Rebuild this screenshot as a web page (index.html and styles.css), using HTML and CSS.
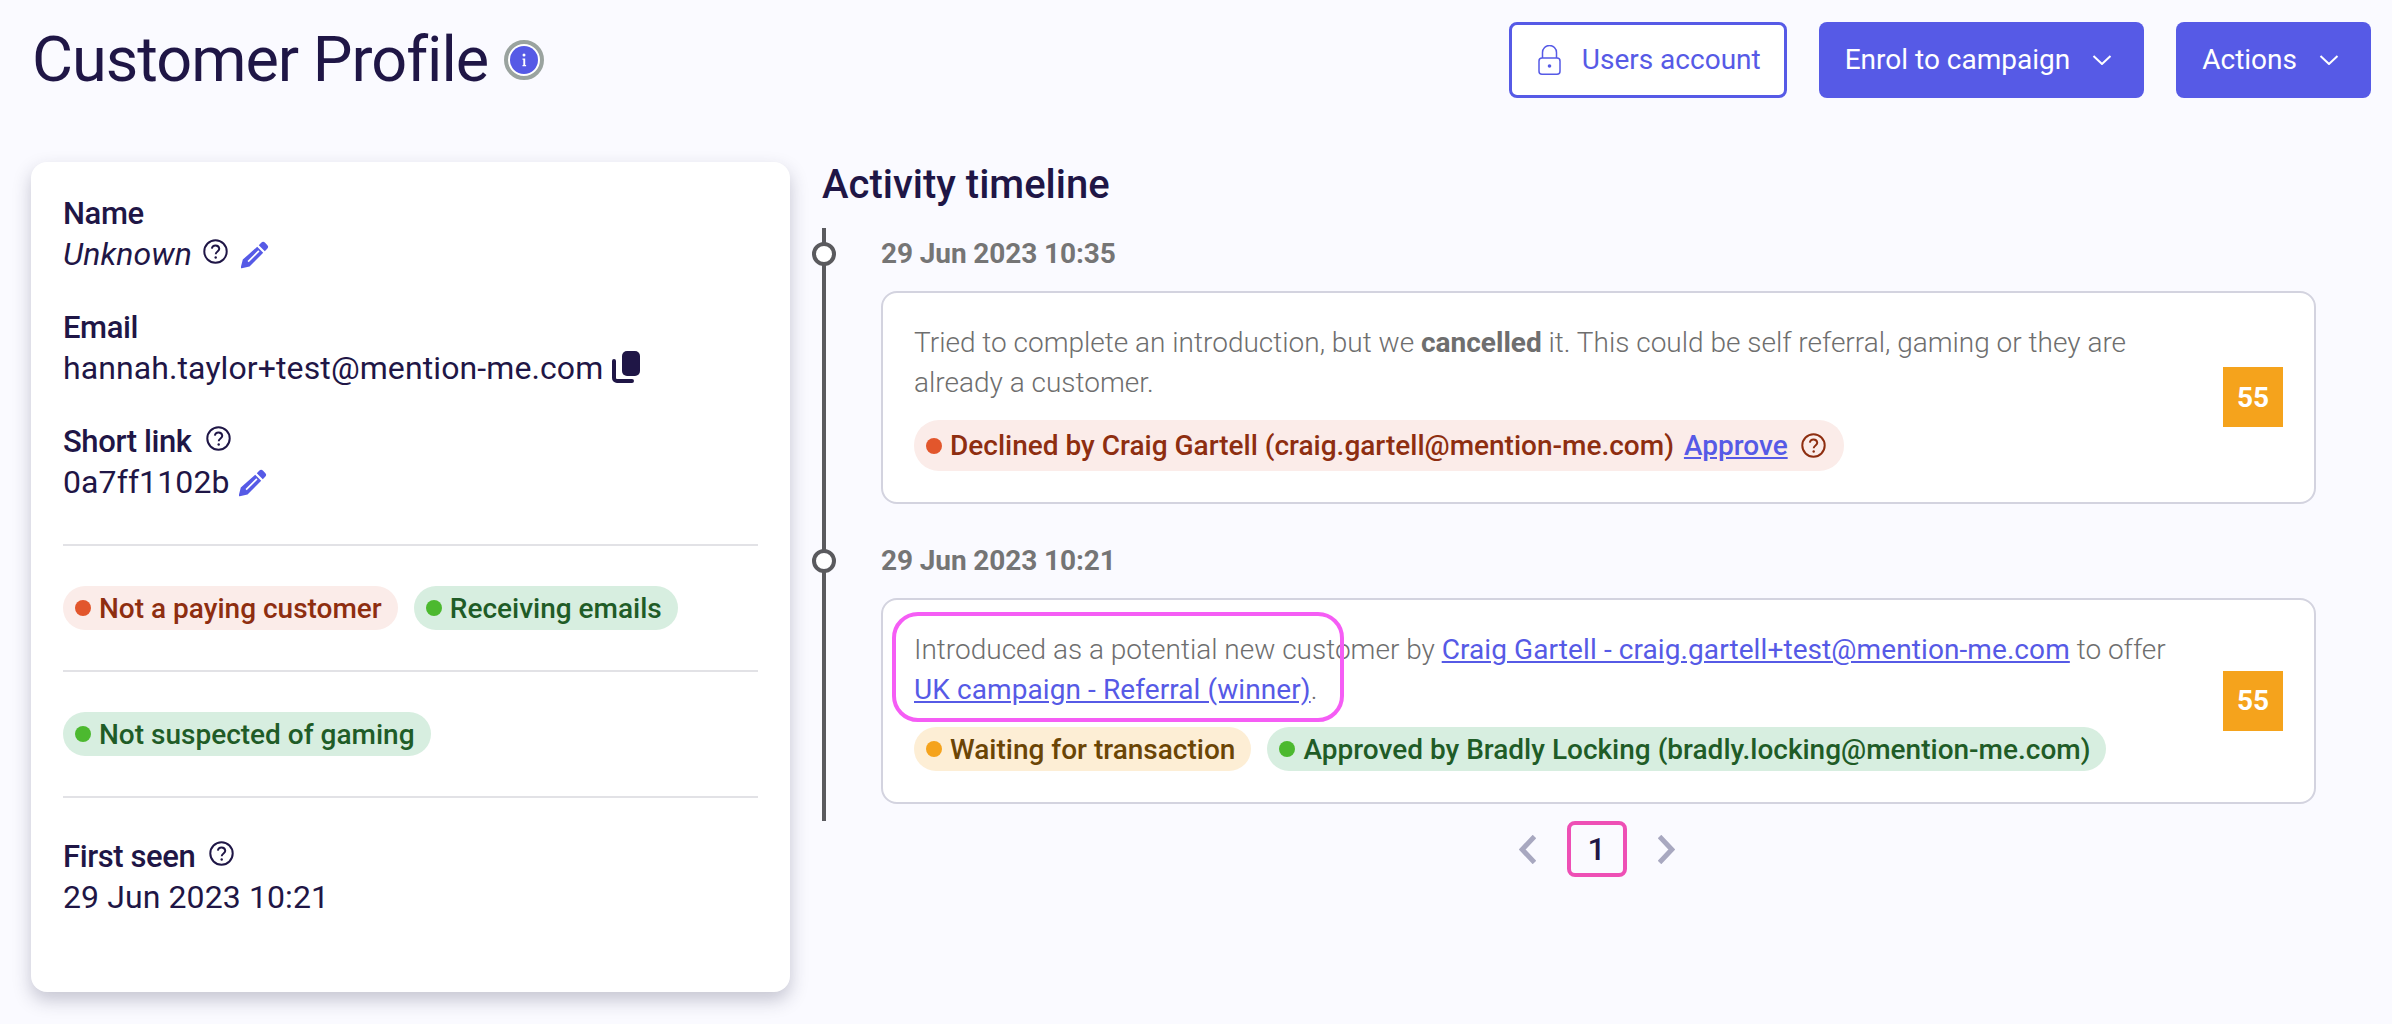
FILE: index.html
```html
<!DOCTYPE html>
<html lang="en">
<head>
<meta charset="utf-8">
<title>Customer Profile</title>
<link rel="stylesheet" href="styles.css">
</head>
<body>
<svg class="defs" width="0" height="0" aria-hidden="true">
  <symbol id="q" viewBox="0 0 25 25"><circle cx="12.5" cy="12.5" r="11.2" fill="none" stroke="currentColor" stroke-width="2"/><path d="M8.8 9.6a3.8 3.8 0 0 1 7.5.2c0 2.500-3.600 2.800-3.600 5.400" fill="none" stroke="currentColor" stroke-width="1.900"/><circle cx="12.700" cy="18.500" r="1.200" fill="currentColor"/></symbol>
  <symbol id="pen" viewBox="0 0 28 28"><path d="M20.200 1.800a2.800 2.800 0 0 1 3.900 0l2.100 2.100a2.800 2.800 0 0 1 0 3.900l-2.400 2.400-6-6zM16.200 5.800l6 6L8.500 25.500 0.800 27.300a.8.8 0 0 1-1-1L1.800 18.600zM17.300 9.300 6.500 20.100l1.200 1.200L18.500 10.500z" fill="currentColor" fill-rule="evenodd"/></symbol>
  <symbol id="chev" viewBox="0 0 20 10"><path d="M1.500 1 10 9 18.500 1" fill="none" stroke="currentColor" stroke-width="2"/></symbol>
</svg>
<div class="page">
  <header class="top">
    <div class="title-wrap">
      <h1 class="title">Customer Profile</h1>
      <svg class="info" viewBox="0 0 40 40"><circle cx="20" cy="20" r="18" fill="#fff" stroke="#9aa39f" stroke-width="4"/><circle cx="20" cy="20" r="14" fill="#565ae6"/><path d="M18.500 18.500h2.700v6.500h.9v1.300h-3.600v-1.300h.8v-5.200h-.8z" fill="#fff"/><circle cx="20" cy="15" r="1.500" fill="#fff"/></svg>
    </div>
    <div class="actions">
      <a class="btn btn-outline">
        <svg class="lock" viewBox="0 0 23 30"><path d="M4.500 13V7.500a7 7 0 0 1 14 0V13" fill="none" stroke="currentColor" stroke-width="1.500"/><rect x="1" y="13" width="21" height="16.200" rx="3" fill="none" stroke="currentColor" stroke-width="1.500"/><circle cx="11.500" cy="21" r="1.800" fill="currentColor"/></svg>
        Users account
      </a>
      <a class="btn btn-solid">Enrol to campaign<svg class="chev"><use href="#chev"/></svg></a>
      <a class="btn btn-solid">Actions<svg class="chev"><use href="#chev"/></svg></a>
    </div>
  </header>

  <main class="main">
    <aside class="panel">
      <div class="field">
        <div class="label">Name</div>
        <div class="value"><em>Unknown</em><svg class="q q-val"><use href="#q"/></svg><svg class="pen"><use href="#pen"/></svg></div>
      </div>
      <div class="field">
        <div class="label">Email</div>
        <div class="value">hannah.taylor+test@mention-me.com<svg class="copy" viewBox="0 0 28 32"><path d="M2 10.500v17a3 3 0 0 0 3 3h15" fill="none" stroke="currentColor" stroke-width="4" stroke-linecap="round" transform="translate(0 -.500)"/><rect x="10" y="0" width="18" height="25" rx="5" fill="currentColor"/></svg></div>
      </div>
      <div class="field field-last">
        <div class="label">Short link<svg class="q q-lab"><use href="#q"/></svg></div>
        <div class="value">0a7ff1102b<svg class="pen pen-short"><use href="#pen"/></svg></div>
      </div>
      <div class="pills-row">
        <span class="pill red"><i class="dot"></i>Not a paying customer</span>
        <span class="pill green"><i class="dot"></i>Receiving emails</span>
      </div>
      <div class="pills-row">
        <span class="pill green"><i class="dot"></i>Not suspected of gaming</span>
      </div>
      <div class="field field-seen">
        <div class="label">First seen<svg class="q q-lab"><use href="#q"/></svg></div>
        <div class="value">29 Jun 2023 10:21</div>
      </div>
    </aside>

    <section class="activity">
      <h2 class="activity-title">Activity timeline</h2>
      <ul class="timeline">
        <li class="event">
          <div class="date">29 Jun 2023 10:35</div>
          <div class="card">
            <div class="card-body">
              <p class="text">Tried to complete an introduction, but we <b>cancelled</b> it. This could be self referral, gaming or they are already a customer.</p>
              <div class="card-pills">
                <span class="pill red pill-tall"><i class="dot"></i>Declined by Craig Gartell (craig.gartell@mention-me.com)<a class="pill-link">Approve</a><svg class="q q-pill"><use href="#q"/></svg></span>
              </div>
            </div>
            <div class="score">55</div>
          </div>
        </li>
        <li class="event event-2">
          <div class="date">29 Jun 2023 10:21</div>
          <div class="card">
            <div class="card-body">
              <div class="highlight"></div>
              <p class="text">Introduced as a potential new customer by <a class="link">Craig Gartell - craig.gartell+test@mention-me.com</a> to offer <a class="link">UK campaign - Referral (winner)</a>.</p>
              <div class="card-pills">
                <span class="pill amber"><i class="dot"></i>Waiting for transaction</span>
                <span class="pill green"><i class="dot"></i>Approved by Bradly Locking (bradly.locking@mention-me.com)</span>
              </div>
            </div>
            <div class="score">55</div>
          </div>
        </li>
      </ul>
      <nav class="pager">
        <svg class="pg-arrow" viewBox="0 0 17 29"><path d="M15.500 1.500 3.200 14.500 15.500 27.500" fill="none" stroke="currentColor" stroke-width="5"/></svg>
        <span class="pg-current">1</span>
        <svg class="pg-arrow" viewBox="0 0 17 29"><path d="M1.500 1.500 13.800 14.500 1.500 27.500" fill="none" stroke="currentColor" stroke-width="5"/></svg>
      </nav>
    </section>
  </main>
</div>
</body>
</html>
```
FILE: styles.css
```css
* { box-sizing: border-box; }
html, body { margin: 0; padding: 0; }
body {
  background: #fafaff;
  color: #1f1646;
  font-family: Roboto, "Liberation Sans", sans-serif;
  font-size: 32px;
  height: 1024px;
  overflow: hidden;
}
.defs { position: absolute; }
.page { padding: 22px 21px 0 31px; }

.top { display: flex; justify-content: space-between; align-items: center; height: 76px; }
.title-wrap { display: flex; align-items: center; gap: 16px; padding-left: 1px; }
.title { margin: 0; font-size: 63px; font-weight: 400; line-height: 76px; letter-spacing: -1px; }
.info { width: 40px; height: 40px; flex: none; }
.actions { display: flex; gap: 32px; }
.btn {
  display: flex; align-items: center; height: 76px; border-radius: 8px;
  font-size: 28px; line-height: 36px; padding: 0 32px 0 26px; white-space: nowrap;
}
.btn-outline { border: 3px solid #565ae6; color: #565ae6; background: #fff; padding: 0 23px 0 26px; gap: 21px; }
.btn-solid { background: #565ae6; color: #fff; gap: 22px; }
.lock { width: 23px; height: 30px; flex: none; }
.chev { width: 20px; height: 10px; flex: none; }

.main { display: flex; gap: 32px; margin-top: 64px; align-items: flex-start; }
.panel {
  width: 759px; height: 830px; flex: none; background: #fff; border-radius: 16px;
  padding: 31px 32px 0;
  box-shadow: 0 8px 18px rgba(40, 40, 70, 0.25);
}
.field { margin-bottom: 32px; }
.field-last { margin-bottom: 41px; }
.label { font-weight: 500; line-height: 41px; display: flex; align-items: center; font-size: 31px; letter-spacing: -0.4px; }
.value { line-height: 41px; display: flex; align-items: center; font-size: 32px; letter-spacing: 0.1px; }
.value em { font-style: italic; }
.q { color: #1f1646; width: 25px; height: 25px; flex: none; }
.q-val { margin: -6px 0 0 11px; }
.q-lab { margin: -6px 0 0 14px; }
.pen { width: 28px; height: 28px; color: #565ae6; flex: none; margin-left: 13px; }
.pen-short { margin-left: 9px; }
.copy { width: 28px; height: 32px; margin: -4px 0 0 9px; flex: none; }

.pills-row { border-top: 2px solid #e2e2e6; padding: 40px 0; display: flex; gap: 16px; }
.pills-row + .field { border-top: 2px solid #e2e2e6; margin: 0; padding-top: 38px; }
.pill {
  display: inline-flex; align-items: center; height: 44px; border-radius: 22px;
  padding: 0 16px 0 12px; font-size: 28px; font-weight: 500; white-space: nowrap;
}
.pill-tall { height: 51px; border-radius: 25px; padding-right: 18px; }
.dot { width: 16px; height: 16px; border-radius: 50%; margin-right: 8px; flex: none; background: currentColor; }
.red { background: #fbece9; color: #8e2e10; }
.red .dot { background: #e2562c; }
.green { background: #d7eee0; color: #1f5c27; }
.green .dot { background: #4cb92f; }
.amber { background: #fdeed5; color: #6b4505; }
.amber .dot { background: #f5a31c; }
.pill-link { color: #565ae6; text-decoration: underline; margin-left: 10px; }
.q-pill { color: #8e2e10; margin-left: 13px; }

.activity { flex: 1; min-width: 0; }
.activity-title { margin: 0; font-size: 40px; line-height: 44px; font-weight: 500; padding-top: 1px; }
.timeline { list-style: none; margin: 21px 55px 0 0; padding: 0 0 17px; border-left: 4px solid #5a5a5e; }
.event { padding-left: 55px; position: relative; }
.event::before {
  content: ""; position: absolute; left: -14px; top: 14px; width: 24px; height: 24px;
  box-sizing: border-box; border-radius: 50%; background: #fff; border: 4px solid #5a5a5e;
}
.event-2 { margin-top: 37px; }
.event-2::before { top: 8px; }
.event:first-child { padding-top: 6px; }
.date { font-size: 28px; font-weight: 700; line-height: 40px; color: #757575; margin-bottom: 17px; letter-spacing: -0.1px; }
.card {
  display: flex; align-items: center; gap: 33px; background: #fff;
  border: 2px solid #d3d3df; border-radius: 16px; padding: 30px 31px 31px;
}
.card-body { flex: 1; min-width: 0; position: relative; }
.highlight {
  position: absolute; left: -22px; top: -18px; width: 452px; height: 110px;
  border: 4px solid #f55df5; border-radius: 26px;
}
.text { margin: 0; font-size: 28px; line-height: 40px; font-weight: 300; color: #6e6e6e; }
.text b { font-weight: 700; color: #6e6e6e; }
.link { color: #565ae6; text-decoration: underline; font-weight: 400; letter-spacing: 0.09px; }
.card-pills { display: flex; gap: 16px; margin-top: 17px; }
.score {
  width: 60px; height: 60px; flex: none; background: #f5a31c; color: #fff;
  display: flex; align-items: center; justify-content: center; font-size: 28px; font-weight: 700;
}

.pager { display: flex; align-items: center; justify-content: center; gap: 31px; color: #a8a8c0; }
.pg-arrow { width: 17px; height: 29px; flex: none; }
.pg-current {
  width: 60px; height: 56px; border: 4px solid #ee4fb5; border-radius: 8px; color: #1f1646;
  display: flex; align-items: center; justify-content: center; font-size: 32px; font-weight: 500;
}
```
